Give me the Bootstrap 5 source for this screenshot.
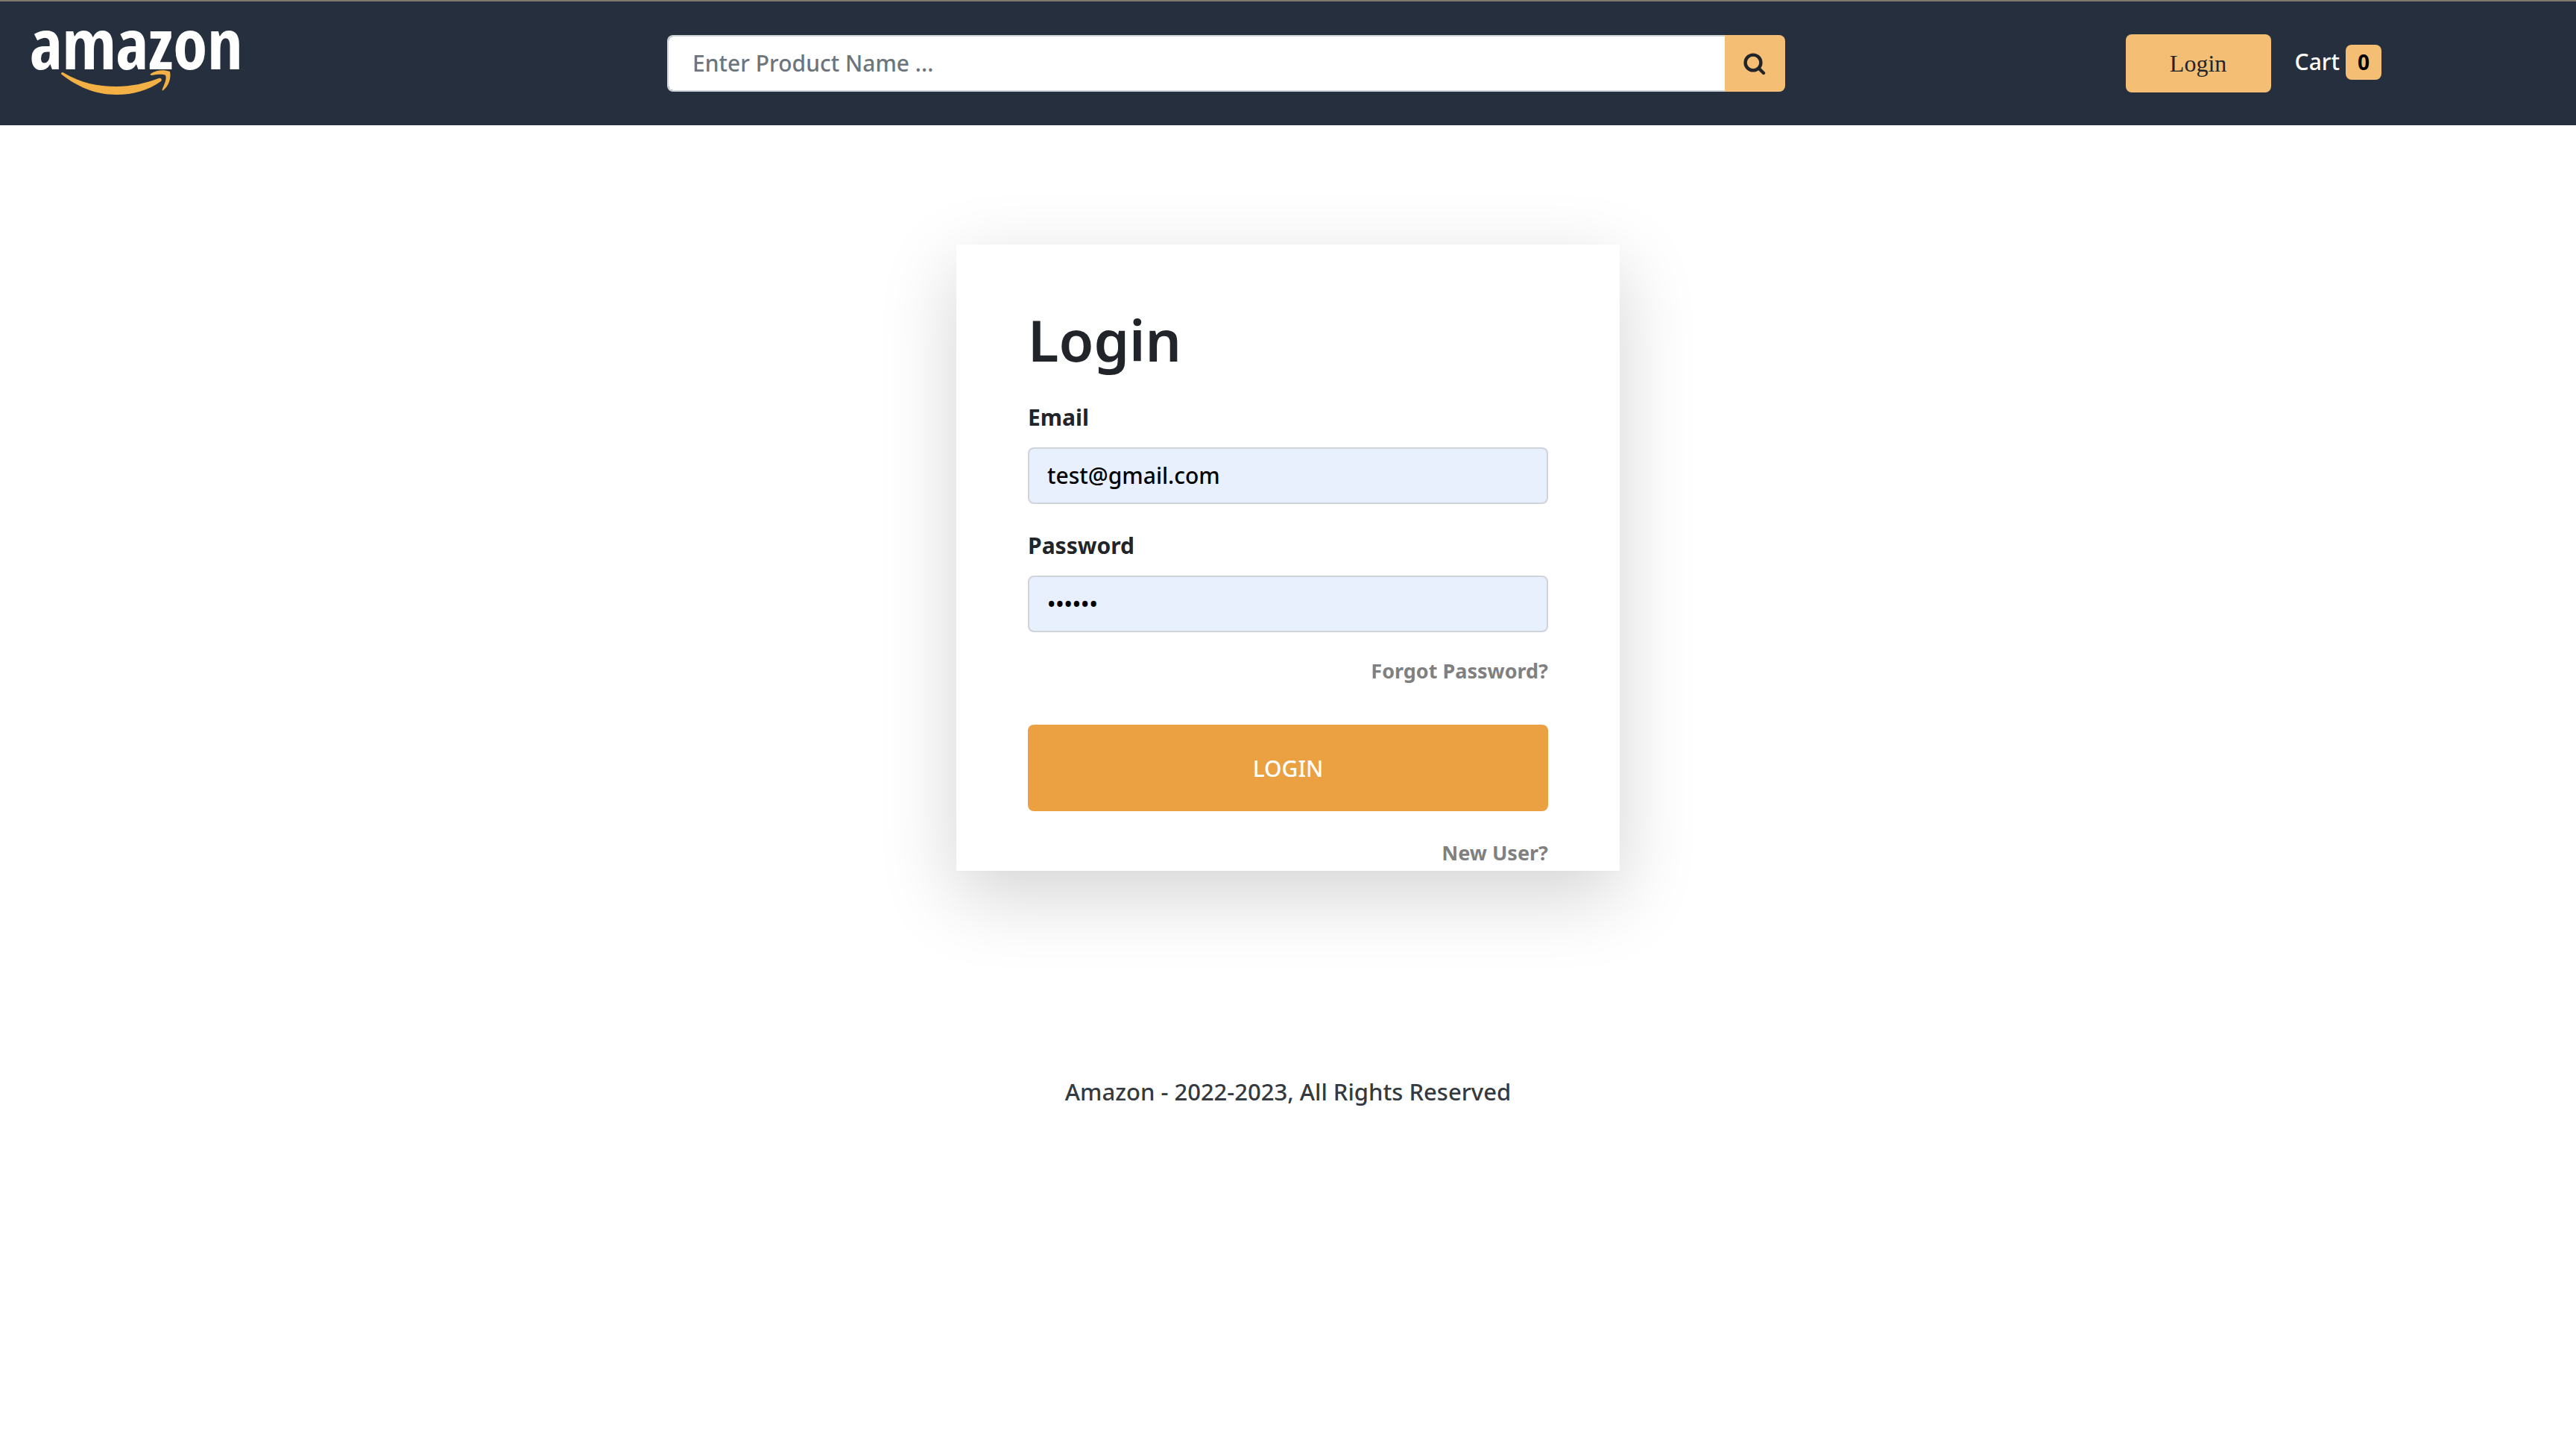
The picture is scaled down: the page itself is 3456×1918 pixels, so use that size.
<!DOCTYPE html>
<html lang="en">
<head>
<meta charset="utf-8">
<meta name="viewport" content="width=device-width, initial-scale=1">
<title>Amazon - Login</title>
<link href="https://cdn.jsdelivr.net/npm/bootstrap@5.3.0/dist/css/bootstrap.min.css" rel="stylesheet">
<style>
  html { font-size: 32px; }
  body {
    --bs-body-font-family: "Noto Sans", "Open Sans", sans-serif;
    --bs-body-font-size: 30px;
    --bs-body-font-weight: 500;
    --bs-body-line-height: 48px;
    --bs-border-width: 2px;
    --bs-border-radius: 8px;
  }
  .site-header { background: #252f3d; border-top: 2px solid #7f7b6a; height: 168px; }
  .brand-cell { width: 25.9%; padding-left: 40px; }
  .search-cell { width: 43.4%; }
  .brand-logo { display: block; width: 310px; height: 140px; }
  .form-control { font-size: 30px; font-weight: 500; line-height: 48px; border: 2px solid #ced4da; border-radius: 8px; padding: 12px 24px; }
  .search-box { padding-left: 32px; border-right: 0; }
  .search-box::placeholder { color: #6c757d; }
  .btn-amber { --bs-btn-bg: #f4bf75; --bs-btn-color: #212529; --bs-btn-hover-bg: #eeb260; --bs-btn-active-bg: #eeb260; border: 0; }
  .btn-search { width: 81px; padding: 0; border-radius: 8px; }
  .btn-search svg { display: block; margin: 0 auto; width: 32px; height: 32px; }
  .btn-login { width: 195px; height: 78px; border-radius: 8px; font: 32px/48px "Liberation Serif", serif; }
  .actions { padding-right: 261px; gap: 32px; }
  .cart-link { gap: 8px; padding-bottom: 4px; }
  .cart-count { background: #f4bf75; color: #000; font-size: 28px; line-height: 31px; padding: 8px 16px; border-radius: 8px; }
  .login-card { width: 890px; margin-top: 160px; padding: 80px 96px 0; }
  .shadow-soft { box-shadow: 0 32px 96px rgba(0, 0, 0, .175); }
  .login-title { font-size: 76px; line-height: 96px; margin-bottom: 32px; font-weight: 600; }
  .field-label { display: block; font-weight: 700; line-height: 48px; margin-bottom: 16px; }
  .login-field { background: #e8effd; color: #000; margin-bottom: 32px; }
  .login-field:focus { background: #e8effd; }
  #password { margin-bottom: 28px; }
  .side-link { display: block; text-align: right; color: gray; font-size: 27px; line-height: 48px; font-weight: 700; text-decoration: none; }
  .btn-submit { --bs-btn-bg: #eba042; --bs-btn-color: #fff; --bs-btn-hover-bg: #dd9132; --bs-btn-hover-color: #fff; --bs-btn-font-weight: 500; height: 116px; font-size: 30px; border: 0; border-radius: 8px; margin: 48px 0 32px; }
  .site-footer { margin-top: 272px; color: #343a40; font-size: 31px; }
</style>
<script defer src="https://cdn.jsdelivr.net/npm/bootstrap@5.3.0/dist/js/bootstrap.bundle.min.js"></script>
</head>
<body>
<header class="site-header d-flex align-items-center">
  <div class="brand-cell">
    <a href="#" aria-label="Amazon home">
      <svg class="brand-logo" viewBox="0 -25 310 140" role="img" aria-label="amazon">
        <text x="0" y="53" font-family="Liberation Sans Narrow, Open Sans Condensed, Roboto Condensed, Noto Sans, sans-serif" font-weight="700" font-size="93" fill="#fff">amazon</text>
        <path fill="#f3b145" d="M42 59c0-2 2-3 4-1 22 13 45 18 70 18 20 0 38-4 57-11 3-1 5 2 3 4-17 12-37 18-60 18-28 0-53-11-73-27-1 0-1-1-1-1z"/>
        <path fill="#f3b145" d="M162 59c7-5 17-6 26-3 2 9-2 20-9 25-1 1-2 0-1-2 3-7 6-14 4-18-4-2-12-1-18 0-2 0-3-1-2-2z"/>
      </svg>
    </a>
  </div>
  <form class="search-cell" role="search">
    <div class="input-group">
      <input type="search" class="form-control search-box" placeholder="Enter Product Name ..." aria-label="Product name">
      <button type="button" class="btn btn-amber btn-search" aria-label="Search">
        <svg viewBox="0 0 32 32" fill="none" stroke="#212529" stroke-linecap="round"><circle cx="14" cy="15" r="10.400" stroke-width="4.400"/><path stroke-width="4.400" d="M22 23l6 6"/></svg>
      </button>
    </div>
  </form>
  <nav class="actions flex-fill d-flex align-items-center justify-content-end">
    <button type="button" class="btn btn-amber btn-login">Login</button>
    <a href="#" class="cart-link text-white text-decoration-none d-flex align-items-center"><span>Cart</span><span class="badge cart-count">0</span></a>
  </nav>
</header>
<main>
  <form class="login-card shadow-soft bg-white mx-auto">
    <h1 class="login-title">Login</h1>
    <label class="field-label" for="email">Email</label>
    <input class="form-control login-field" type="email" id="email" value="test@gmail.com">
    <label class="field-label" for="password">Password</label>
    <input class="form-control login-field" type="password" id="password" value="123456">
    <a href="#" class="side-link">Forgot Password?</a>
    <button type="button" class="btn btn-submit w-100">LOGIN</button>
    <a href="#" class="side-link">New User?</a>
  </form>
</main>
<footer class="site-footer text-center">Amazon - 2022-2023, All Rights Reserved</footer>
</body>
</html>
